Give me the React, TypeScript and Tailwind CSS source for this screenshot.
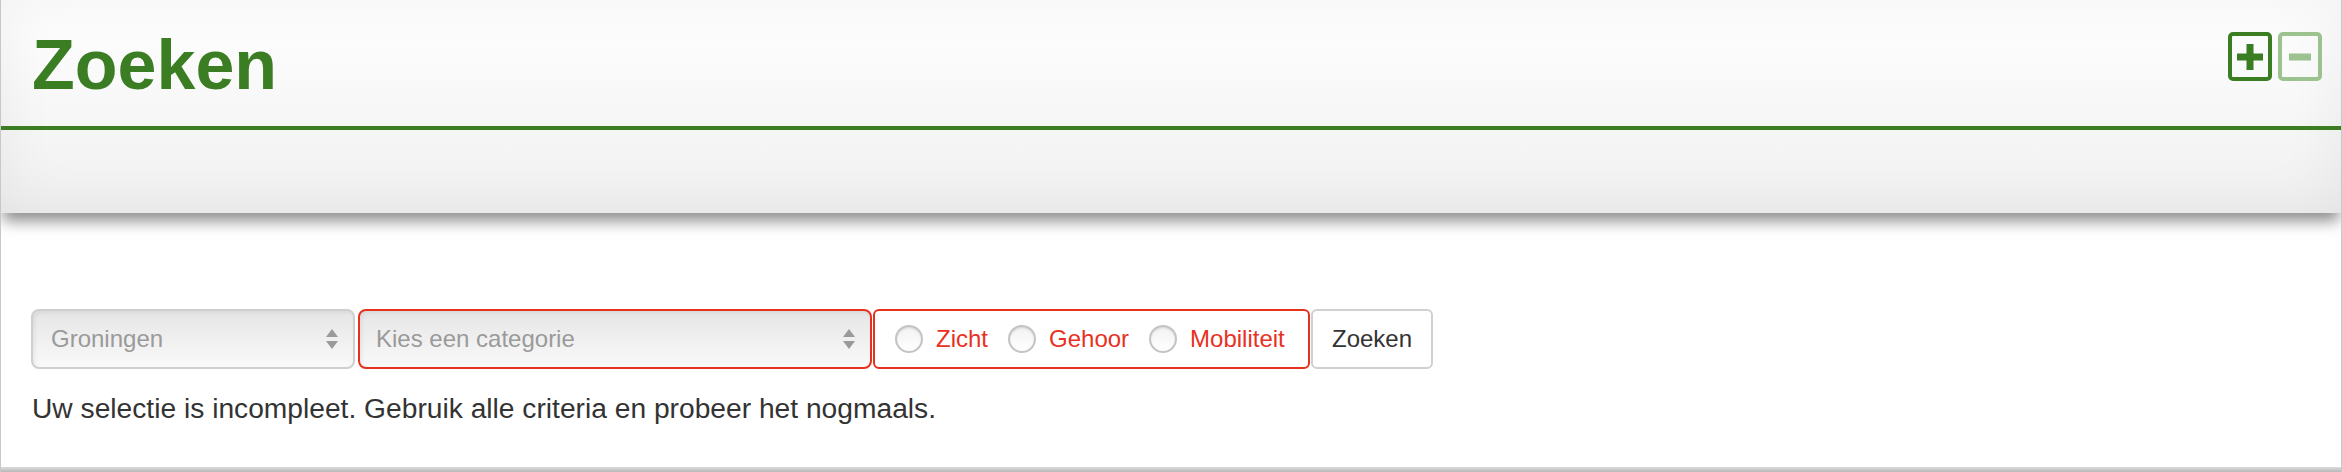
import React from "react";

const font = { fontFamily: '"Liberation Sans", Arial, Helvetica, sans-serif' };

function SelectArrows() {
  return (
    <svg width="14" height="26" viewBox="0 0 14 26" className="shrink-0">
      <path d="M7 3 L13 11 L1 11 Z" fill="#9a9a9a" />
      <path d="M7 23 L13 15 L1 15 Z" fill="#9a9a9a" />
    </svg>
  );
}

function Radio({ label }: { label: string }) {
  return (
    <label className="flex items-center gap-[13px]">
      <span className="w-[28px] h-[28px] rounded-full border-2 border-[#c4c4c4] bg-gradient-to-b from-[#f2f2f2] to-white shadow-[inset_0_1px_2px_rgba(0,0,0,0.12)]" />
      <span className="text-[24px] text-[#e8311f] leading-none">{label}</span>
    </label>
  );
}

export default function App() {
  return (
    <div style={font} className="w-full h-[472px] bg-white border-x border-[#c8c8c8] flex flex-col overflow-hidden">
      {/* Header panel */}
      <div className="relative h-[213px] shrink-0 bg-gradient-to-b from-white to-[#f0f0f0] shadow-[0_10px_14px_-2px_rgba(0,0,0,0.45),inset_0_0_60px_rgba(0,0,0,0.06)] z-10 flex flex-col">
        <div className="h-[126px] flex items-start justify-between pl-[31px] pr-[19px]">
          <h1 className="text-[70px] leading-none font-bold text-[#3a7d23] pt-[30px]">Zoeken</h1>
          <div className="flex gap-[6px] mt-[32px]">
            <div className="w-[44px] h-[49px] rounded-[5px] border-[4px] border-[#3a7d23] flex items-center justify-center">
              <svg width="26" height="26" viewBox="0 0 26 26">
                <rect x="9.5" y="0" width="7" height="26" fill="#3a7d23" />
                <rect x="0" y="9.5" width="26" height="7" fill="#3a7d23" />
              </svg>
            </div>
            <div className="w-[44px] h-[49px] rounded-[5px] border-[4px] border-[#9cc28f] flex items-center justify-center">
              <svg width="22" height="26" viewBox="0 0 22 26">
                <rect x="0" y="9.5" width="22" height="7" fill="#9cc28f" />
              </svg>
            </div>
          </div>
        </div>
        <div className="h-[4px] bg-[#3a7d23]" />
      </div>

      {/* Search form */}
      <div className="flex-1 pt-[96px] pl-[30px]">
        <div className="flex items-stretch h-[60px]">
          <div className="w-[324px] flex items-center justify-between pl-[18px] pr-[14px] rounded-[8px] border-2 border-[#cfcfcf] bg-gradient-to-b from-[#e6e6e6] to-[#f9f9f9] shadow-[inset_2px_2px_4px_rgba(0,0,0,0.06)]">
            <span className="text-[24px] text-[#9a9a9a]">Groningen</span>
            <SelectArrows />
          </div>
          <div className="ml-[3px] w-[514px] flex items-center justify-between pl-[16px] pr-[14px] rounded-[8px] border-2 border-[#e5321f] bg-gradient-to-b from-[#e6e6e6] to-[#f9f9f9] shadow-[inset_2px_2px_4px_rgba(0,0,0,0.06)]">
            <span className="text-[24px] text-[#9a9a9a]">Kies een categorie</span>
            <SelectArrows />
          </div>
          <div className="ml-[1px] w-[437px] flex items-center gap-[20px] pl-[20px] rounded-[6px] border-2 border-[#e5321f] bg-white">
            <Radio label="Zicht" />
            <Radio label="Gehoor" />
            <Radio label="Mobiliteit" />
          </div>
          <button className="ml-[1px] w-[122px] rounded-[6px] border-2 border-[#d0d0d0] bg-white text-[24px] text-[#333]">
            Zoeken
          </button>
        </div>
        <p className="mt-[19px] pl-[1px] text-[28.2px] leading-[40px] text-[#333]">
          Uw selectie is incompleet. Gebruik alle criteria en probeer het nogmaals.
        </p>
      </div>

      <div className="h-[5px] shrink-0 bg-gradient-to-b from-[#dcdcdc] to-[#b8b8b8]" />
    </div>
  );
}
